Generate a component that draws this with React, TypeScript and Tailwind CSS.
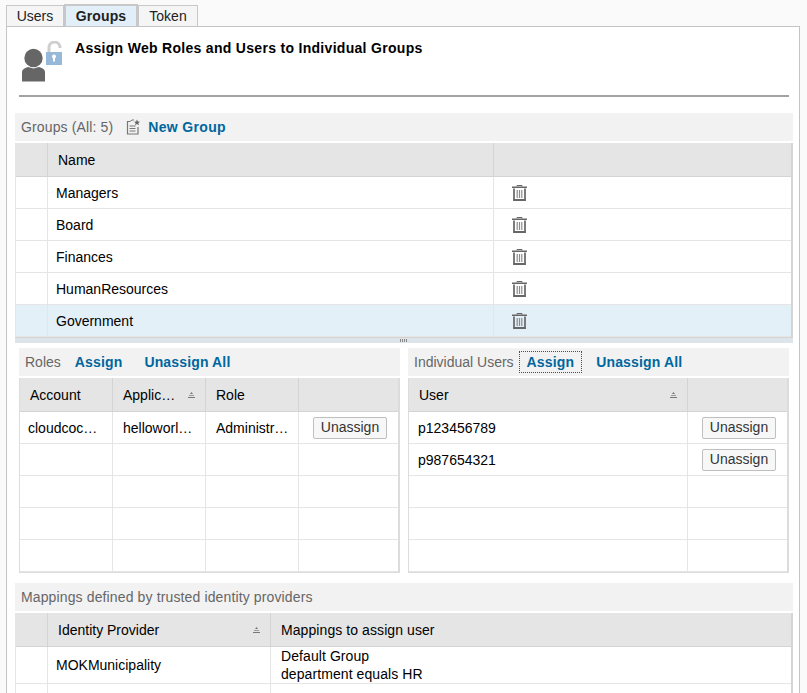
import React from 'react';

const Trash = () => (
  <svg width="15" height="16" viewBox="0 0 15 16" className="block">
    <path d="M5 1.500V.5h5v1" fill="none" stroke="#666" strokeWidth="1" />
    <rect x="0" y="1.500" width="15" height="1.500" fill="#666" />
    <path d="M2 3.500v11.500h11V3.500" fill="none" stroke="#6e6e6e" strokeWidth="1.800" />
    <rect x="1.500" y="14" width="12" height="2" fill="#666" />
    <path d="M5.200 5v8M7.500 5v8M9.800 5v8" stroke="#8c8c8c" strokeWidth="1.200" />
  </svg>
);

const NewIcon = () => (
  <svg width="15" height="16" viewBox="0 0 15 16" className="block">
    <path d="M4 2.500H1.500v12.500h10.500V8" fill="none" stroke="#777" strokeWidth="1.200" />
    <path d="M4 2.500L6 1h2" fill="none" stroke="#777" strokeWidth="1" />
    <path d="M3.500 7h6M3.500 9.500h6M3.500 12h6" stroke="#777" strokeWidth="1" />
    <path d="M11 0.500l.9 2 2.100.2-1.600 1.400.5 2.100-1.900-1.100-1.900 1.100.5-2.100L8 2.700l2.100-.2z" fill="#666" />
  </svg>
);

const UserLock = () => (
  <svg width="40" height="41" viewBox="0 0 40 41" className="block">
    <circle cx="11.500" cy="17" r="9.200" fill="#666" />
    <path d="M0 40.500v-9c0-3 2-4 6-5.500l5.500 1.500L17 26c4 1.500 6 2.500 6 5.500v9z" fill="#666" />
    <path d="M27 11.500V6.500a5.500 5.500 0 0 1 11 0V7" fill="none" stroke="#cfcfcf" strokeWidth="3" />
    <rect x="24" y="11" width="16" height="13" fill="#96b9da" />
    <circle cx="32" cy="15.500" r="2" fill="#fff" />
    <rect x="31" y="15.500" width="2" height="5" fill="#fff" />
  </svg>
);

const Sort = () => (
  <svg width="7" height="6" viewBox="0 0 7 6" className="block shrink-0">
    <path d="M3.500 0L5 2H2z" fill="#777" />
    <rect x="1" y="3" width="5" height="1" fill="#999" />
    <rect x="0" y="5" width="7" height="1" fill="#777" />
  </svg>
);

const Link = ({ children, focus, wide }: { children: React.ReactNode; focus?: boolean; wide?: boolean }) => (
  <span
    className={`block font-bold text-[#00679e] ${wide ? 'tracking-[0.35px]' : 'tracking-[0.15px]'} ${
      focus ? 'border border-dotted border-[#00679e] px-[7px] h-[22px] leading-[20px]' : ''
    }`}
  >
    {children}
  </span>
);

const Toolbar = ({ children }: { children: React.ReactNode }) => (
  <div className="flex items-center h-7 bg-[#f2f2f2] text-[#666] pl-[6px]">{children}</div>
);

const HeadCell = ({ label, sort }: { label?: string; sort?: boolean }) => (
  <div className="flex items-center justify-between min-w-0 h-full border-r border-[#d4d4d4] pl-[10px] pr-[10px] text-black">
    <span>{label}</span>
    {sort && <Sort />}
  </div>
);

const Cell = ({ children, className = '' }: { children?: React.ReactNode; className?: string }) => (
  <div className={`flex items-center min-w-0 h-full border-r border-[#e5e5e5] last:border-r-0 ${className}`}>{children}</div>
);

const UnassignBtn = () => (
  <button className="w-[74px] h-[22px] pb-[2px] bg-[#f7f7f7] border border-[#bfbfbf] rounded-[2px] text-[#333] text-sm leading-[16px]">
    Unassign
  </button>
);

const groups = ['Managers', 'Board', 'Finances', 'HumanResources', 'Government'];

const roleCols = 'grid grid-cols-[93px_93px_93px_1fr]';
const userCols = 'grid grid-cols-[279px_1fr]';

const emptyRows = [0, 1, 2];

export default function App() {
  return (
    <div className="h-[693px] overflow-hidden bg-[#fafafa] text-sm text-black font-['Liberation_Sans',Arial,sans-serif] pl-[6px] pr-[7px] pt-1">
      {/* tabs */}
      <div className="flex items-end h-[22px]">
        <div className="w-[58px] h-[21px] bg-[#f5f5f5] border border-b-0 border-[#c8c8c8] flex items-center justify-center text-[#222]">Users</div>
        <div className="w-[74px] h-[22px] bg-[#e3eff8] border-2 border-b-0 border-[#c8c8c8] flex items-center justify-center font-bold text-[#222] tracking-[0.1px]">Groups</div>
        <div className="w-[60px] h-[21px] bg-[#f5f5f5] border border-b-0 border-[#c8c8c8] flex items-center justify-center text-[#222]">Token</div>
      </div>

      <div className="border border-[#c4c4c4] border-b-0 bg-white pl-2 pr-[6px] h-[667px]">
        {/* heading */}
        <div className="mx-[4px] h-[70px] border-b-2 border-[#a3a3a3] flex items-start">
          <div className="pl-[3px] pt-[14px] w-[56px] shrink-0"><UserLock /></div>
          <h1 className="font-bold tracking-[0.3px] pt-[13px] leading-[16px]">Assign Web Roles and Users to Individual Groups</h1>
        </div>

        {/* groups */}
        <div className="mt-4">
          <Toolbar>
            <span className="tracking-[0.13px]">Groups (All: 5)</span>
            <span className="ml-[13px] mr-[7px]"><NewIcon /></span>
            <Link wide>New Group</Link>
          </Toolbar>
          <div className="mt-[2px] border-l border-r-2 border-l-[#e5e5e5] border-r-[#d4d4d4]">
            <div className="grid grid-cols-[32px_446px_1fr] h-[34px] bg-[#e5e5e5] border-b border-[#d4d4d4]">
              <HeadCell />
              <HeadCell label="Name" />
              <div />
            </div>
            {groups.map((g, i) => (
              <div
                key={g}
                className={`grid grid-cols-[32px_446px_1fr] h-8 border-b border-[#e5e5e5] ${i === 4 ? 'bg-[#e4f0f8]' : ''}`}
              >
                <Cell />
                <Cell className="pl-[8px]">{g}</Cell>
                <Cell className="pl-[18px]"><Trash /></Cell>
              </div>
            ))}
          </div>
          <div className="relative h-[6px] bg-[#dde5ea] border-t border-[#d4d4d4]">
            <div className="absolute left-[385px] top-[1px] w-[8px] h-[3px] bg-[repeating-linear-gradient(90deg,#888_0_1px,transparent_1px_2px)]" />
          </div>
        </div>

        {/* roles + users */}
        <div className="mx-[4px] mt-[5px] grid grid-cols-[381px_381px] gap-x-[8px]">
          <div>
            <Toolbar>
              <span>Roles</span>
              <span className="ml-[14px]"><Link>Assign</Link></span>
              <span className="ml-[22px]"><Link>Unassign All</Link></span>
            </Toolbar>
            <div className="mt-[2px] border-l border-b border-r-2 border-[#dcdcdc]">
              <div className={`${roleCols} h-[34px] bg-[#e5e5e5] border-b border-[#d4d4d4]`}>
                <HeadCell label="Account" />
                <HeadCell label="Applic…" sort />
                <HeadCell label="Role" />
                <div />
              </div>
              <div className={`${roleCols} h-8 border-b border-[#e5e5e5]`}>
                <Cell className="pl-2">cloudcoc…</Cell>
                <Cell className="pl-[10px]">helloworl…</Cell>
                <Cell className="pl-[10px]">Administr…</Cell>
                <Cell className="pl-[14px]"><UnassignBtn /></Cell>
              </div>
              {[...emptyRows, 3].map((r) => (
                <div key={r} className={`${roleCols} h-8 border-b border-[#e5e5e5]`}>
                  <Cell /><Cell /><Cell /><Cell />
                </div>
              ))}
            </div>
          </div>

          <div>
            <Toolbar>
              <span>Individual Users</span>
              <span className="ml-[5px]"><Link focus>Assign</Link></span>
              <span className="ml-[14px]"><Link>Unassign All</Link></span>
            </Toolbar>
            <div className="mt-[2px] border-l border-b border-r-2 border-[#dcdcdc]">
              <div className={`${userCols} h-[34px] bg-[#e5e5e5] border-b border-[#d4d4d4]`}>
                <HeadCell label="User" sort />
                <div />
              </div>
              {['p123456789', 'p987654321'].map((u) => (
                <div key={u} className={`${userCols} h-8 border-b border-[#e5e5e5]`}>
                  <Cell className="pl-[9px]">{u}</Cell>
                  <Cell className="pl-[14px]"><UnassignBtn /></Cell>
                </div>
              ))}
              {emptyRows.map((r) => (
                <div key={r} className={`${userCols} h-8 border-b border-[#e5e5e5]`}>
                  <Cell /><Cell />
                </div>
              ))}
            </div>
          </div>
        </div>

        {/* mappings */}
        <div className="mt-[10px]">
          <Toolbar><span className="tracking-[0.13px]">Mappings defined by trusted identity providers</span></Toolbar>
          <div className="mt-[2px] border-l border-r-2 border-l-[#e5e5e5] border-r-[#d4d4d4]">
            <div className="grid grid-cols-[32px_223px_1fr] h-[34px] bg-[#e5e5e5] border-b border-[#d4d4d4]">
              <HeadCell />
              <HeadCell label="Identity Provider" sort />
              <div className="flex items-center pl-[10px] tracking-[0.08px]">Mappings to assign user</div>
            </div>
            <div className="grid grid-cols-[32px_223px_1fr] h-[37px] border-b border-[#e5e5e5]">
              <Cell />
              <Cell className="pl-[8px]">MOKMunicipality</Cell>
              <div className="pl-[10px] leading-[18px] tracking-[0.08px]">
                <div>Default Group</div>
                <div>department equals HR</div>
              </div>
            </div>
            <div className="grid grid-cols-[32px_223px_1fr] h-8">
              <Cell /><Cell /><div />
            </div>
          </div>
        </div>
      </div>
    </div>
  );
}
